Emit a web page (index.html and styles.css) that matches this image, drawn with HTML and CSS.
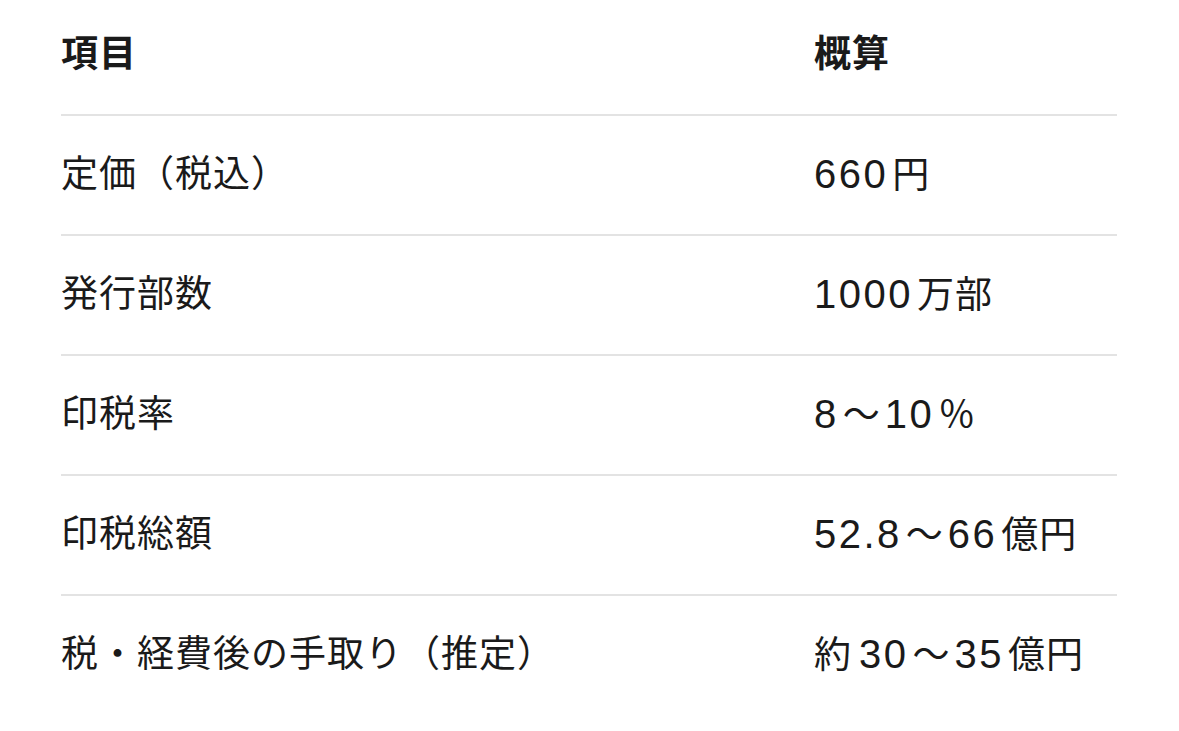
FILE: index.html
```html
<!DOCTYPE html>
<html lang="ja">
<head>
<meta charset="utf-8">
<link rel="stylesheet" href="styles.css">
</head>
<body>
<div class="table">
  <div class="row head">
    <div class="cell c1">項目</div>
    <div class="cell c2">概算</div>
  </div>
  <div class="row">
    <div class="cell c1">定価（税込）</div>
    <div class="cell c2"><span class="num gap-r">660</span>円</div>
  </div>
  <div class="row">
    <div class="cell c1">発行部数</div>
    <div class="cell c2"><span class="num gap-r">1000</span>万部</div>
  </div>
  <div class="row">
    <div class="cell c1">印税率</div>
    <div class="cell c2"><span class="num">8</span><span class="tilde">～</span><span class="num gap-r">10</span>％</div>
  </div>
  <div class="row">
    <div class="cell c1">印税総額</div>
    <div class="cell c2"><span class="num">52.8</span><span class="tilde">～</span><span class="num gap-r">66</span>億円</div>
  </div>
  <div class="row last">
    <div class="cell c1">税・経費後の手取り（推定）</div>
    <div class="cell c2">約<span class="num gap-l">30</span><span class="tilde">～</span><span class="num gap-r">35</span>億円</div>
  </div>
</div>
</body>
</html>
```

FILE: styles.css
```css
html, body {
  margin: 0;
  padding: 0;
  background: #ffffff;
}
body {
  font-family: "Liberation Sans", "Noto Sans CJK JP", sans-serif;
  color: #1a1a1a;
  font-size: 37px;
}
.table {
  margin-left: 61px;
  width: 1056px;
  display: flex;
  flex-direction: column;
}
.row {
  display: grid;
  grid-template-columns: 753px 1fr;
  height: 118px;
  align-items: center;
  border-bottom: 2px solid #e3e3e3;
}
.row.head {
  height: 114px;
  align-items: start;
}
.row.head .cell {
  font-weight: 700;
  padding-top: 33px;
}
.row.last {
  border-bottom: none;
}
.cell {
  line-height: 44px;
  white-space: nowrap;
  letter-spacing: 1px;
}
.num {
  font-size: 40px;
  letter-spacing: 2.5px;
}
.gap-r {
  margin-right: 4px;
}
.gap-l {
  margin-left: 7px;
}
.tilde {
  margin: 0 4px;
}
```
